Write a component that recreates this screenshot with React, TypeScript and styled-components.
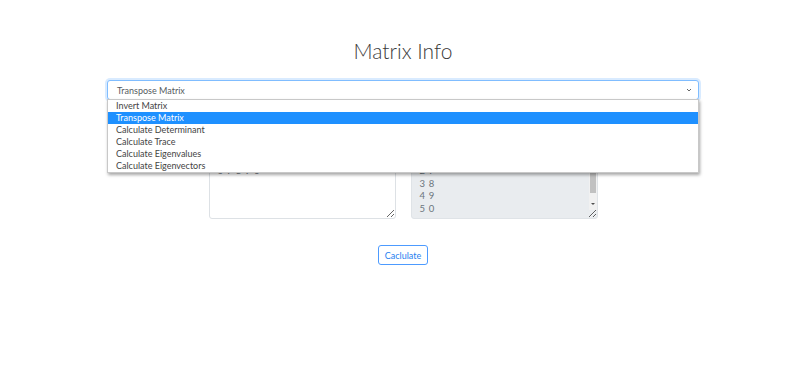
import { useEffect, useRef } from "react";
import styled, { createGlobalStyle } from "styled-components";

const GlobalStyle = createGlobalStyle`
    body {
        margin: 0;
        background: #fff;
        font-family: Lato, "Open Sans", sans-serif;
        color: #212529;
    }
`;

const Page = styled.div`
    display: flex;
    flex-direction: column;
    align-items: center;
    padding-top: 37px;
`;

const Title = styled.h1`
    margin: 0;
    font-size: 21px;
    font-weight: 300;
    line-height: 27px;
    color: #3a3a3a;
`;

const SelectWrap = styled.div`
    position: relative;
    width: 592px;
    margin-top: 16px;
    z-index: 2;
`;

const SelectBox = styled.div`
    box-sizing: border-box;
    display: flex;
    align-items: center;
    justify-content: space-between;
    height: 20px;
    padding: 0 6px 0 9px;
    border: 1px solid #80bdff;
    border-radius: 3px;
    box-shadow: 0 0 0 2px rgba(0, 123, 255, 0.15);
    font-size: 9px;
    color: #555b61;
    background: #fff;
`;

const ListBox = styled.ul`
    position: absolute;
    top: 19px;
    left: 0;
    right: 0;
    margin: 0;
    padding: 0;
    list-style: none;
    background: #fff;
    border: 1px solid #c8c8c8;
    box-shadow: 1px 2px 3px rgba(0, 0, 0, 0.35);
`;

const Option = styled.li<{ $active?: boolean }>`
    height: 12px;
    line-height: 12px;
    padding-left: 8px;
    font-size: 9px;
    color: ${({ $active }) => ($active ? "#fff" : "#444")};
    background: ${({ $active }) => ($active ? "#1e90ff" : "transparent")};
`;

const Editors = styled.div`
    display: flex;
    gap: 15px;
    margin-top: 49px;
`;

const AreaWrap = styled.div`
    position: relative;
`;

const MatrixArea = styled.textarea<{ $readOnly?: boolean }>`
    display: block;
    box-sizing: border-box;
    width: 187px;
    height: 70px;
    padding: 2px 8px 1px;
    border: 1px solid ${({ $readOnly }) => ($readOnly ? "#dfe3e7" : "#dde1e5")};
    border-radius: 3px;
    background: ${({ $readOnly }) => ($readOnly ? "#e9ecef" : "#fff")};
    font-family: Lato, "Open Sans", sans-serif;
    font-size: 9.5px;
    line-height: 12.8px;
    letter-spacing: 0.6px;
    color: #6c757d;
    overflow: hidden;
    resize: both;
    outline: none;
`;

const ScrollRail = styled.div`
    position: absolute;
    top: 1px;
    right: 1px;
    bottom: 9px;
    width: 8px;
    background: #f1f1f1;
`;

const ScrollThumb = styled.div`
    position: absolute;
    top: 10px;
    left: 1px;
    right: 1px;
    bottom: 17px;
    background: #c1c1c1;
`;

const ScrollArrow = styled.div`
    position: absolute;
    left: 2px;
    bottom: 5px;
    width: 0;
    height: 0;
    border-left: 2px solid transparent;
    border-right: 2px solid transparent;
    border-top: 2px solid #505050;
`;

const CalcButton = styled.button`
    margin-top: 26px;
    height: 20px;
    padding: 0 6px;
    border: 1px solid #4d9bff;
    border-radius: 3px;
    background: #fff;
    color: #1f7ff0;
    font-family: Lato, "Open Sans", sans-serif;
    font-size: 9px;
    cursor: pointer;
`;

const operations = [
    "Invert Matrix",
    "Transpose Matrix",
    "Calculate Determinant",
    "Calculate Trace",
    "Calculate Eigenvalues",
    "Calculate Eigenvectors",
];

function Chevron() {
    return (
        <svg width="6" height="4" viewBox="0 0 6 4">
            <path d="M1 1 L3 3 L5 1" fill="none" stroke="#555" strokeWidth="0.9" />
        </svg>
    );
}

function App() {
    const resultRef = useRef<HTMLTextAreaElement>(null);
    const selected = "Transpose Matrix";

    useEffect(() => {
        if (resultRef.current) {
            resultRef.current.scrollTop = resultRef.current.scrollHeight;
        }
    }, []);

    return (
        <>
            <GlobalStyle />
            <Page>
                <Title>Matrix Info</Title>
                <SelectWrap>
                    <SelectBox>
                        <span>{selected}</span>
                        <Chevron />
                    </SelectBox>
                    <ListBox>
                        {operations.map((op) => (
                            <Option key={op} $active={op === selected}>
                                {op}
                            </Option>
                        ))}
                    </ListBox>
                </SelectWrap>
                <Editors>
                    <AreaWrap>
                        <MatrixArea defaultValue={"1 2 3 4 5\n6 7 8 9 0"} />
                    </AreaWrap>
                    <AreaWrap>
                        <MatrixArea
                            ref={resultRef}
                            $readOnly
                            readOnly
                            defaultValue={"1 6\n2 7\n3 8\n4 9\n5 0"}
                        />
                        <ScrollRail>
                            <ScrollThumb />
                            <ScrollArrow />
                        </ScrollRail>
                    </AreaWrap>
                </Editors>
                <CalcButton>Caclulate</CalcButton>
            </Page>
        </>
    );
}

export default App;
